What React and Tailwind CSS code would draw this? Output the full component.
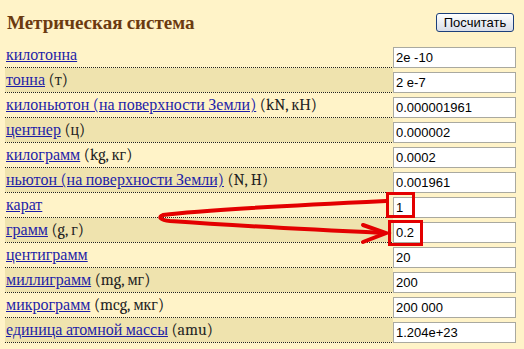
import React from 'react'

const rows = [
  { name: 'килотонна', unit: '', value: '2e -10' },
  { name: 'тонна', unit: '(т)', value: '2 e-7' },
  { name: 'килоньютон (на поверхности Земли)', unit: '(kN, кН)', value: '0.000001961' },
  { name: 'центнер', unit: '(ц)', value: '0.000002' },
  { name: 'килограмм', unit: '(kg, кг)', value: '0.0002' },
  { name: 'ньютон (на поверхности Земли)', unit: '(N, H)', value: '0.001961' },
  { name: 'карат', unit: '', value: '1' },
  { name: 'грамм', unit: '(g, г)', value: '0.2' },
  { name: 'центиграмм', unit: '', value: '20' },
  { name: 'миллиграмм', unit: '(mg, мг)', value: '200' },
  { name: 'микрограмм', unit: '(mcg, мкг)', value: '200 000' },
  { name: 'единица атомной массы', unit: '(amu)', value: '1.204e+23' },
]

const Arrow = () => {
  return (
    <svg className="absolute left-0 top-0 pointer-events-none" width="524" height="349" viewBox="0 0 524 349">
      <rect x="387.5" y="193.5" width="26" height="23" fill="none" stroke="#e30000" strokeWidth="3" />
      <rect x="389.5" y="221.5" width="32" height="23" fill="none" stroke="#e30000" strokeWidth="3" />
      <path d="M386 201 C 300 205, 200 210, 163 215 C 158 217, 160 220, 170 221 C 240 226, 320 230, 384 233"
        fill="none" stroke="#e30000" strokeWidth="4" strokeLinecap="round" />
      <path d="M363 225 L 386 233 L 363 242" fill="none" stroke="#e30000" strokeWidth="4" strokeLinejoin="miter" strokeLinecap="round" />
    </svg>
  )
}

const App = () => {
  return (
    <div className="relative w-[524px] h-[349px] overflow-hidden bg-[#fff3c8] px-[5px]">
      <div className="flex justify-between items-start h-[43px]">
        <h1 className="mt-[9px] ml-[2px] text-[19px] font-bold text-[#6b3a10] font-serif [font-family:Liberation_Serif,serif]">
          Метрическая система
        </h1>
        <button className="mt-[13px] mr-[5px] w-[78px] h-[19px] rounded-[3px] border border-[#1c3f7a] bg-gradient-to-b from-white to-[#d8dde8] text-[13px] leading-none text-black [font-family:Liberation_Sans,sans-serif]">
          Посчитать
        </button>
      </div>
      <div className="w-[511px]">
        {rows.map((r, i) => (
          <div key={r.name} className="flex h-[25px] border-b border-dotted border-[#222]">
            <div className={`flex-1 pl-[1px] pt-[2px] text-[16px] leading-[20px] font-serif [font-family:Liberation_Serif,serif] text-[#222] whitespace-nowrap ${i % 2 ? 'bg-[#efe3ae]' : ''}`}>
              <a href="#" className="text-[#1e1ea8] underline">{r.name}</a>
              {r.unit && <span> {r.unit}</span>}
            </div>
            <div className="w-[123px] pt-[1px]">
              <input
                readOnly
                value={r.value}
                className="w-[123px] h-[21px] border border-[#a9a9a0] bg-white px-[2px] text-[13px] text-black [font-family:Liberation_Sans,sans-serif] outline-none"
              />
            </div>
          </div>
        ))}
      </div>
      <Arrow />
    </div>
  )
}

export default App
